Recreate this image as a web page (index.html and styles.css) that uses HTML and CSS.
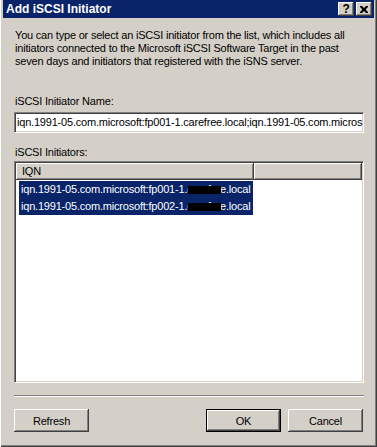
FILE: index.html
```html
<!DOCTYPE html>
<html lang="en">

<head>
    <meta charset="UTF-8">
    <meta name="viewport" content="width=device-width, initial-scale=1.0">
    <title>Add iSCSI Initiator</title>
    <link rel="stylesheet" href="styles.css">
</head>

<body>

    <div class="window">
        <div class="title-bar">
            <span class="title">Add iSCSI Initiator</span>
            <div class="caption-buttons">
                <span class="cap-btn help">?</span>
                <span class="cap-btn close">
                    <svg width="8" height="7" viewBox="0 0 8 7">
                        <path d="M0 0h2l2 2 2-2h2v1l-2 2v1l2 2v1h-2l-2-2-2 2h-2v-1l2-2v-1l-2-2z" fill="#000" />
                    </svg>
                </span>
            </div>
        </div>

        <div class="content">
            <p class="intro">You can type or select an iSCSI initiator from the list, which includes all
                initiators connected to the Microsoft iSCSI Software Target in the past
                seven days and initiators that registered with the iSNS server.</p>

            <label class="field-label" for="initiatorName">iSCSI Initiator Name:</label>
            <div class="textbox" id="initiatorName">iqn.1991-05.com.microsoft:fp001-1.carefree.local;iqn.1991-05.com.micros</div>

            <div class="field-label list-label">iSCSI Initiators:</div>
            <div class="listview">
                <div class="lv-header">
                    <div class="lv-col first">IQN</div>
                    <div class="lv-col rest"></div>
                </div>
                <div class="lv-rows">
                    <div class="lv-row">iqn.1991-05.com.microsoft:fp001-1.<span class="redact">carefre</span>e.local</div>
                    <div class="lv-row">iqn.1991-05.com.microsoft:fp002-1.<span class="redact">carefre</span>e.local</div>
                </div>
            </div>

            <div class="separator"></div>

            <div class="button-row">
                <button class="btn">Refresh</button>
                <div class="right-buttons">
                    <button class="btn btn-default">OK</button>
                    <button class="btn">Cancel</button>
                </div>
            </div>
        </div>
    </div>

</body>

</html>
```

FILE: styles.css
```css
body {
    margin: 0;
    padding: 0;
    background-color: #d4d0c8;
    font-family: "Liberation Sans", Arial, sans-serif;
    font-size: 11px;
    letter-spacing: -0.2px;
    color: #000;
}

.window {
    box-sizing: border-box;
    width: 377px;
    height: 447px;
    padding: 0 3px 4px 3px;
    background-color: #d4d0c8;
    box-shadow: inset 1px 0 #ffffff, inset -1px -1px #404040, inset -2px -2px #808080;
    display: flex;
    flex-direction: column;
}

.title-bar {
    height: 18px;
    background-color: #0a246a;
    display: flex;
    align-items: center;
    justify-content: space-between;
    padding: 0 2px 0 3px;
}

.title {
    color: #fff;
    font-weight: bold;
    font-size: 12px;
    letter-spacing: 0;
}

.caption-buttons {
    display: flex;
    gap: 2px;
}

.cap-btn {
    box-sizing: border-box;
    width: 16px;
    height: 14px;
    background-color: #d4d0c8;
    box-shadow: inset -1px -1px #404040, inset 1px 1px #ffffff, inset -2px -2px #808080;
    display: flex;
    align-items: center;
    justify-content: center;
    font-weight: bold;
    font-size: 12px;
    line-height: 14px;
}

.content {
    flex: 1;
    padding: 11px 10px 0 11px;
    display: flex;
    flex-direction: column;
}

.intro {
    margin: 0 0 0 1px;
    line-height: 13px;
}

.field-label {
    display: block;
    line-height: 13px;
    margin: 27px 0 4px 1px;
}

.list-label {
    margin-top: 13px;
    margin-bottom: 2px;
}

.textbox {
    box-sizing: border-box;
    height: 21px;
    background-color: #fff;
    border-style: solid;
    border-width: 1px;
    border-color: #808080 #ffffff #ffffff #808080;
    box-shadow: inset 1px 1px #404040, inset -1px -1px #d4d0c8;
    padding: 0 1px 0 2px;
    line-height: 19px;
    white-space: nowrap;
    overflow: hidden;
}

.listview {
    box-sizing: border-box;
    height: 222px;
    background-color: #fff;
    border-style: solid;
    border-width: 1px;
    border-color: #808080 #ffffff #ffffff #808080;
    box-shadow: inset 1px 1px #404040, inset -1px -1px #d4d0c8;
    padding: 1px;
}

.lv-header {
    display: flex;
    height: 17px;
}

.lv-col {
    box-sizing: border-box;
    height: 17px;
    background-color: #d4d0c8;
    box-shadow: inset -1px -1px #404040, inset 1px 1px #ffffff, inset -2px -2px #808080;
    line-height: 16px;
    padding-left: 6px;
}

.lv-col.first {
    width: 238px;
}

.lv-col.rest {
    flex: 1;
}

.lv-rows {
    padding: 1px 0 0 3px;
}

.lv-row {
    width: 234px;
    height: 17px;
    line-height: 17px;
    padding-left: 2px;
    box-sizing: border-box;
    background-color: #0a246a;
    color: #fff;
    white-space: nowrap;
}

.redact {
    position: relative;
}

.redact::after {
    content: "";
    position: absolute;
    left: 1px;
    right: -1px;
    top: 3px;
    bottom: 1px;
    background-color: #000;
}

.separator {
    margin-top: 12px;
    height: 0;
    border-top: 1px solid #808080;
    border-bottom: 1px solid #ffffff;
}

.button-row {
    margin-top: 12px;
    display: flex;
    justify-content: space-between;
}

.right-buttons {
    display: flex;
    gap: 7px;
    padding-right: 1px;
}

.btn {
    box-sizing: border-box;
    width: 75px;
    height: 23px;
    padding: 0;
    border: none;
    background-color: #d4d0c8;
    box-shadow: inset -1px -1px #404040, inset 1px 1px #ffffff, inset -2px -2px #808080;
    font-family: "Liberation Sans", Arial, sans-serif;
    font-size: 11px;
    letter-spacing: -0.2px;
    color: #000;
}

.btn-default {
    border: 1px solid #000;
}
```
